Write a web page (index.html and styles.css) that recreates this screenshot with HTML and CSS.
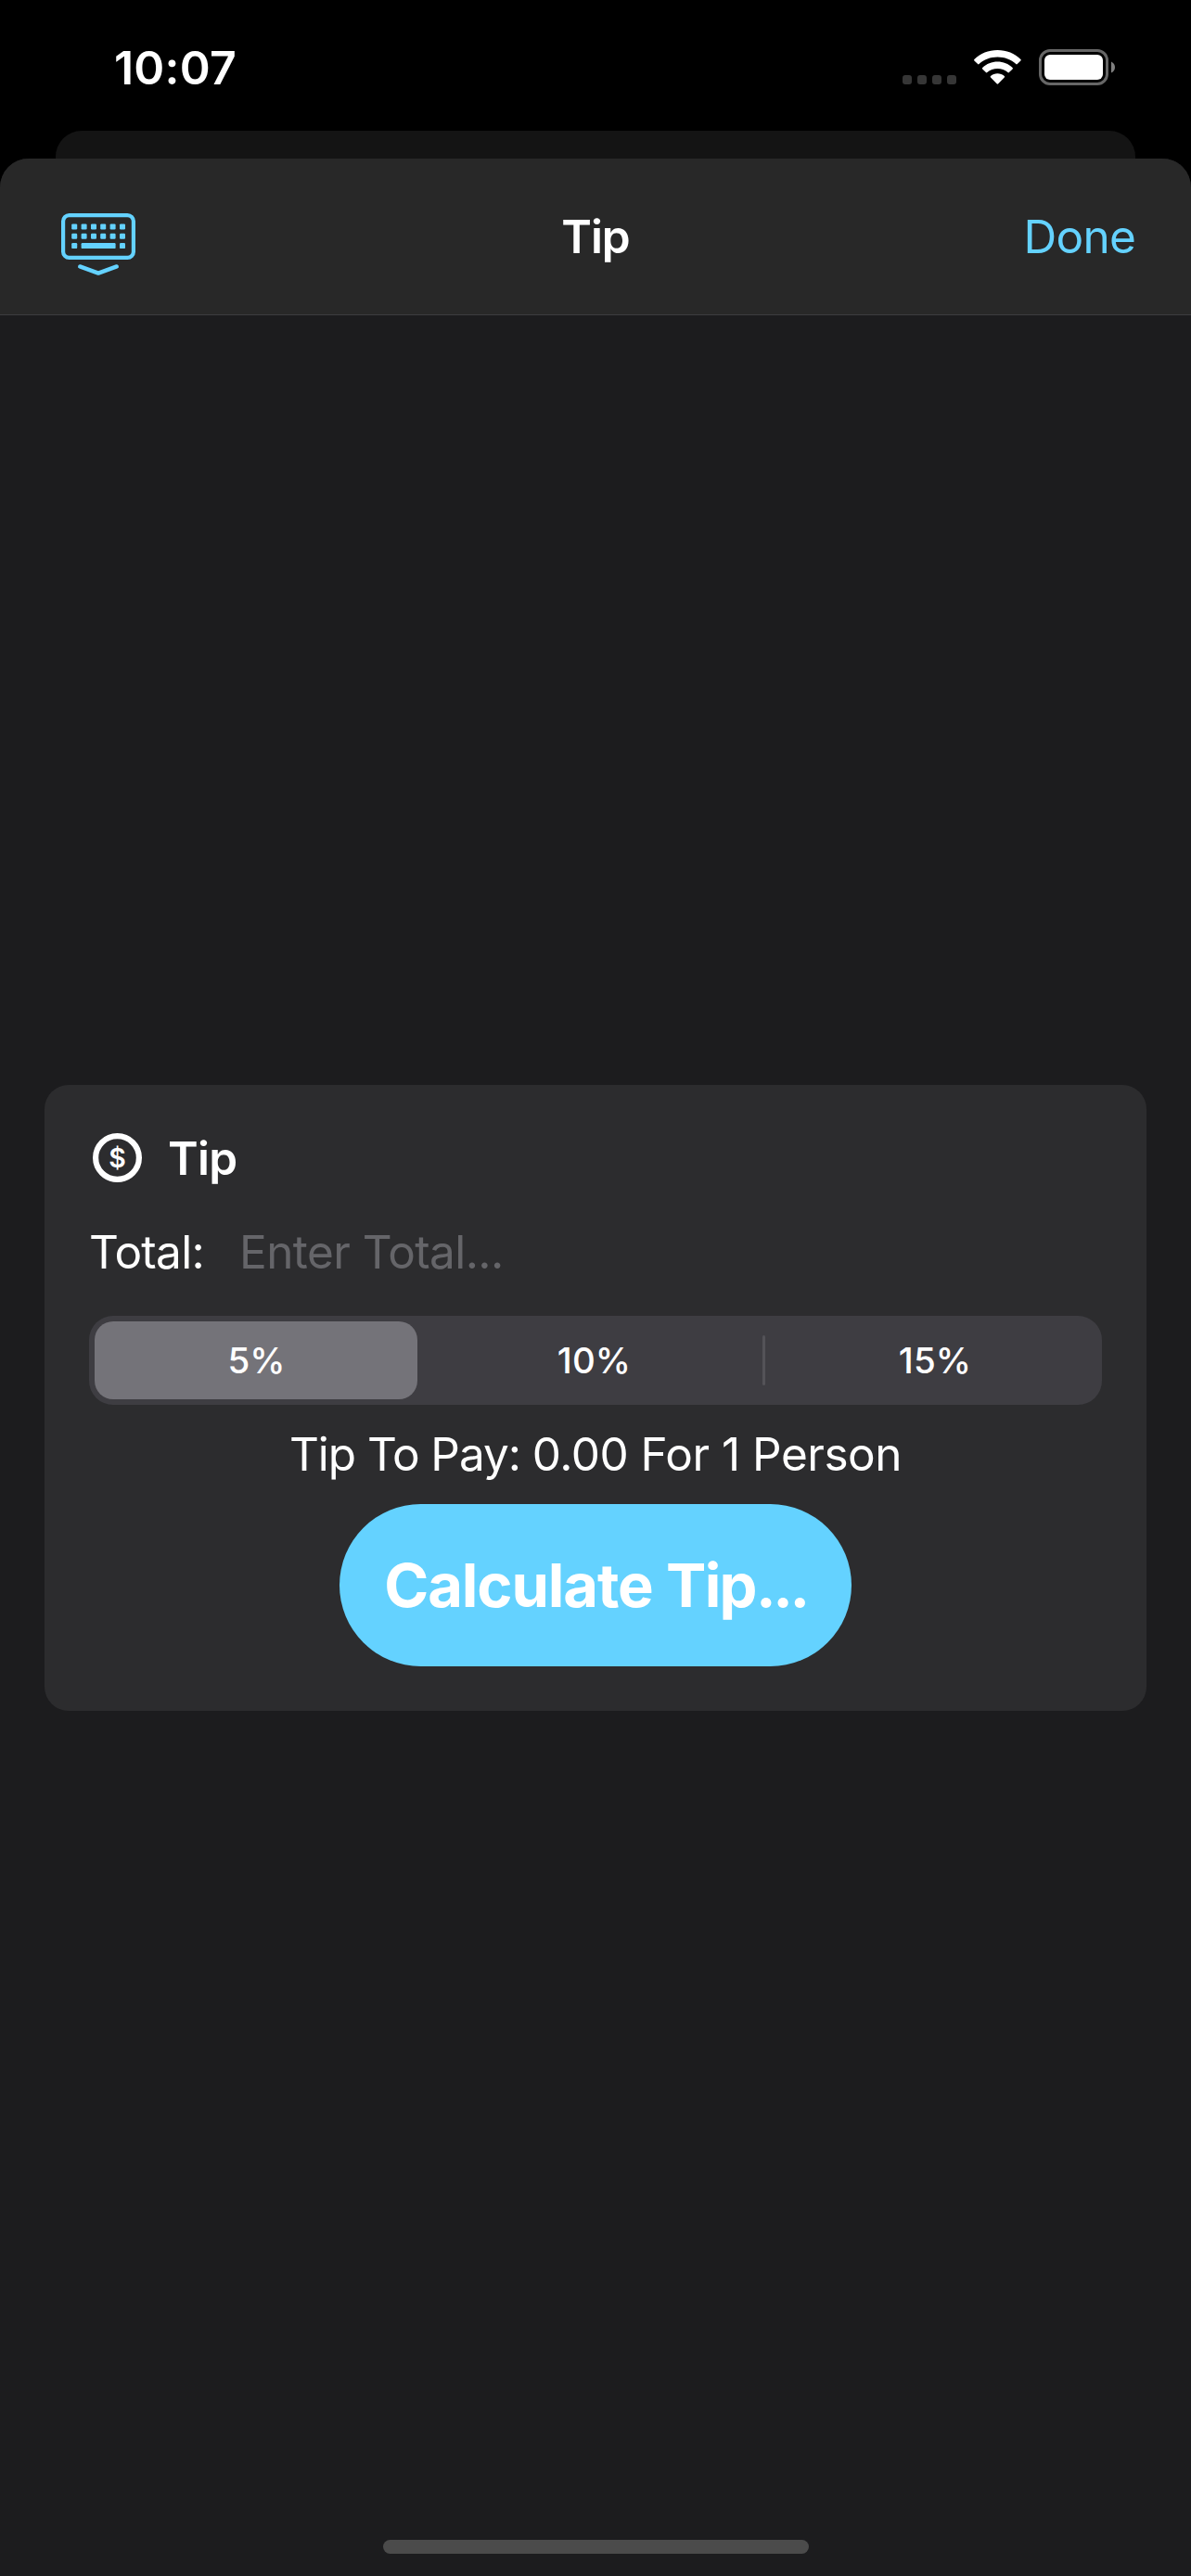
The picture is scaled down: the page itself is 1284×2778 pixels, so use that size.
FILE: index.html
```html
<!DOCTYPE html>
<html lang="en">
<head>
<meta charset="utf-8">
<title>Tip</title>
<link rel="stylesheet" href="styles.css">
</head>
<body>
<div class="screen">
  <div class="status">
    <span class="time">10:07</span>
    <svg class="status-icons" width="230" height="40" viewBox="0 0 230 40" aria-hidden="true">
      <g fill="#363636">
        <rect x="1" y="28" width="10" height="10" rx="3"/>
        <rect x="17" y="28" width="10" height="10" rx="3"/>
        <rect x="33" y="28" width="10" height="10" rx="3"/>
        <rect x="49" y="28" width="10" height="10" rx="3"/>
      </g>
      <g fill="#fff">
        <path d="M103.4 1C113 1 122 4.600 128.400 10.900Q129.200 11.700 128.400 12.500L124.700 16.100Q124 16.700 123.300 16.100C118 11.200 111 8.500 103.400 8.500S88.800 11.200 83.500 16.100Q82.800 16.700 82.100 16.100L78.400 12.500Q77.600 11.700 78.400 10.900C84.800 4.600 93.800 1 103.400 1Z"/>
        <path d="M103.400 13.600C109.500 13.600 115.200 15.900 119.600 19.900Q120.400 20.700 119.600 21.500L115.900 25.100Q115.200 25.700 114.500 25.100C111.500 22.500 107.600 21.100 103.400 21.100S95.300 22.500 92.300 25.100Q91.600 25.700 90.900 25.100L87.200 21.500Q86.400 20.700 87.200 19.900C91.600 15.900 97.300 13.600 103.400 13.600Z"/>
        <path d="M103.400 26.200C106.100 26.200 108.700 27.200 110.800 28.900Q111.600 29.700 110.800 30.500L104.200 37.300Q103.400 38 102.600 37.300L96 30.500Q95.200 29.700 96 28.900C98.100 27.200 100.700 26.200 103.400 26.200Z"/>
        <rect x="154" y="6" width="63" height="27" rx="6"/>
      </g>
      <rect x="149.500" y="1.500" width="72" height="36" rx="10.500" fill="none" stroke="#666" stroke-width="3"/>
      <path d="M226 13.500Q230 15.500 230 19.500T226 25.500Z" fill="#808080"/>
    </svg>
  </div>
  <div class="back-sheet"></div>
  <main class="sheet">
    <header class="bar">
      <svg class="keyboard" width="80" height="67" viewBox="0 0 80 67" fill="none" stroke="#64d2ff" aria-label="Hide keyboard">
        <rect x="2.100" y="2.100" width="75.800" height="45.800" rx="6.500" stroke-width="4.200"/>
        <path d="M20.200 57.400L40 64.600L59.800 57.400" stroke-width="4.400" stroke-linecap="round" stroke-linejoin="round"/>
        <g fill="#64d2ff" stroke="none">
          <rect x="11.200" y="11.400" width="6" height="6" rx="1.200"/><rect x="21.600" y="11.400" width="6" height="6" rx="1.200"/><rect x="32" y="11.400" width="6" height="6" rx="1.200"/><rect x="42.200" y="11.400" width="6" height="6" rx="1.200"/><rect x="52.600" y="11.400" width="6" height="6" rx="1.200"/><rect x="63" y="11.400" width="6" height="6" rx="1.200"/>
          <rect x="11.200" y="21.800" width="6" height="6" rx="1.200"/><rect x="21.600" y="21.800" width="6" height="6" rx="1.200"/><rect x="32" y="21.800" width="6" height="6" rx="1.200"/><rect x="42.200" y="21.800" width="6" height="6" rx="1.200"/><rect x="52.600" y="21.800" width="6" height="6" rx="1.200"/><rect x="63" y="21.800" width="6" height="6" rx="1.200"/>
          <rect x="11.200" y="32.100" width="6" height="6" rx="1.200"/><rect x="21.600" y="32.100" width="37" height="6" rx="1.200"/><rect x="63" y="32.100" width="6" height="6" rx="1.200"/>
        </g>
      </svg>
      <h1 class="title">Tip</h1>
      <a class="done">Done</a>
    </header>
    <section class="card">
      <div class="heading">
        <svg width="53" height="53" viewBox="0 0 53 53" aria-hidden="true">
          <circle cx="26.500" cy="26.500" r="23.400" fill="none" stroke="#fff" stroke-width="6.200"/>
          <text class="coin" x="26.500" y="36.600" text-anchor="middle">$</text>
        </svg>
        <h2 class="name">Tip</h2>
      </div>
      <div class="field">
        <label class="label" for="total">Total:</label>
        <input class="input" id="total" type="text" placeholder="Enter Total...">
      </div>
      <div class="segments">
        <span class="segment selected">5%</span>
        <span class="segment">10%</span>
        <span class="divider"></span>
        <span class="segment">15%</span>
      </div>
      <p class="result"><span class="result-label">Tip To Pay: </span>0.00 For 1 Person</p>
      <button class="calculate" type="button"><span class="verb">Calculate </span>Tip<span class="dots">...</span></button>
    </section>
    <div class="home"></div>
  </main>
</div>
</body>
</html>
```
FILE: styles.css
```css
* { box-sizing: border-box; }
body {
  margin: 0;
  background: #000;
  color: #fff;
  font: 400 49.5px/60px Inter, "Liberation Sans", sans-serif;
}
h1, h2, p { margin: 0; }
svg { display: block; flex: none; }
.screen {
  display: flex;
  flex-direction: column;
  width: 1284px;
  height: 2778px;
  overflow: hidden;
}
.status {
  display: flex;
  justify-content: space-between;
  flex: none;
  height: 141px;
  padding: 43px 82px 0 123px;
}
.time {
  font-size: 50px;
  font-weight: 600;
  letter-spacing: 0.23px;
}
.status-icons { margin-top: 10px; }
.back-sheet {
  flex: none;
  height: 30px;
  margin: 0 60px;
  border-radius: 28px 28px 0 0;
  background: #141414;
}
.sheet {
  display: flex;
  flex-direction: column;
  flex: 1;
  border-radius: 31px 31px 0 0;
  background: #1c1c1e;
  overflow: hidden;
}
.bar {
  display: grid;
  grid-template-columns: 1fr auto 1fr;
  align-items: center;
  flex: none;
  height: 169px;
  padding: 0 60px 0 66px;
  border-bottom: 1px solid #3d3d3f;
  background: #282828;
}
.keyboard { margin-top: 17px; }
.title {
  margin-left: -6px;
  font-size: 49.5px;
  font-weight: 600;
  letter-spacing: -1.07px;
}
.done {
  justify-self: end;
  color: #64d2ff;
  letter-spacing: -0.75px;
}
.card {
  display: flex;
  flex-direction: column;
  flex: none;
  height: 675px;
  margin: 830px 48px 0;
  padding: 48px;
  border-radius: 26px;
  background: #2c2c2e;
}
.heading {
  display: flex;
  align-items: center;
  gap: 28px;
  height: 61px;
  padding-left: 4px;
}
.name {
  font-size: 49.5px;
  font-weight: 600;
  letter-spacing: -0.75px;
}
.coin {
  fill: #fff;
  font-size: 28.5px;
  font-weight: 600;
}
.field {
  display: flex;
  gap: 38px;
  margin-top: 41px;
}
.label { letter-spacing: -0.7px; }
.input {
  flex: 1;
  min-width: 0;
  height: 60px;
  padding: 0;
  border: 0;
  outline: 0;
  background: none;
  color: #fff;
  font: inherit;
  letter-spacing: -0.59px;
}
.input::placeholder { color: #656569; opacity: 1; }
.segments {
  display: grid;
  grid-template-columns: 360px 366px 3px 363px;
  align-items: center;
  height: 96px;
  margin-top: 39px;
  border-radius: 26px;
  background: #3e3d42;
}
.segment {
  padding-left: 3px;
  font-size: 38.5px;
  font-weight: 500;
  letter-spacing: 0.1px;
  line-height: 84px;
  text-align: center;
}
.selected {
  margin: 0 6px;
  padding-left: 1px;
  border-radius: 20px;
  background: #747379;
}
.divider {
  height: 54px;
  border-radius: 1.5px;
  background: #545358;
}
.result {
  margin-top: 23px;
  letter-spacing: -0.5px;
  text-align: center;
}
.result-label { letter-spacing: -1.07px; }
.calculate {
  align-self: center;
  flex: none;
  width: 552px;
  height: 175px;
  margin-top: 24px;
  padding: 0;
  border: 0;
  border-radius: 88px;
  background: #64d2ff;
  color: #fff;
  font: 700 65px/175px Inter, "Liberation Sans", sans-serif;
  letter-spacing: -1.68px;
}
.verb { letter-spacing: -1.1px; }
.dots { letter-spacing: -3.4px; }
.home {
  flex: none;
  width: 459px;
  height: 15px;
  margin: auto auto 24px 413px;
  border-radius: 8px;
  background: #4b4b4b;
}
```
